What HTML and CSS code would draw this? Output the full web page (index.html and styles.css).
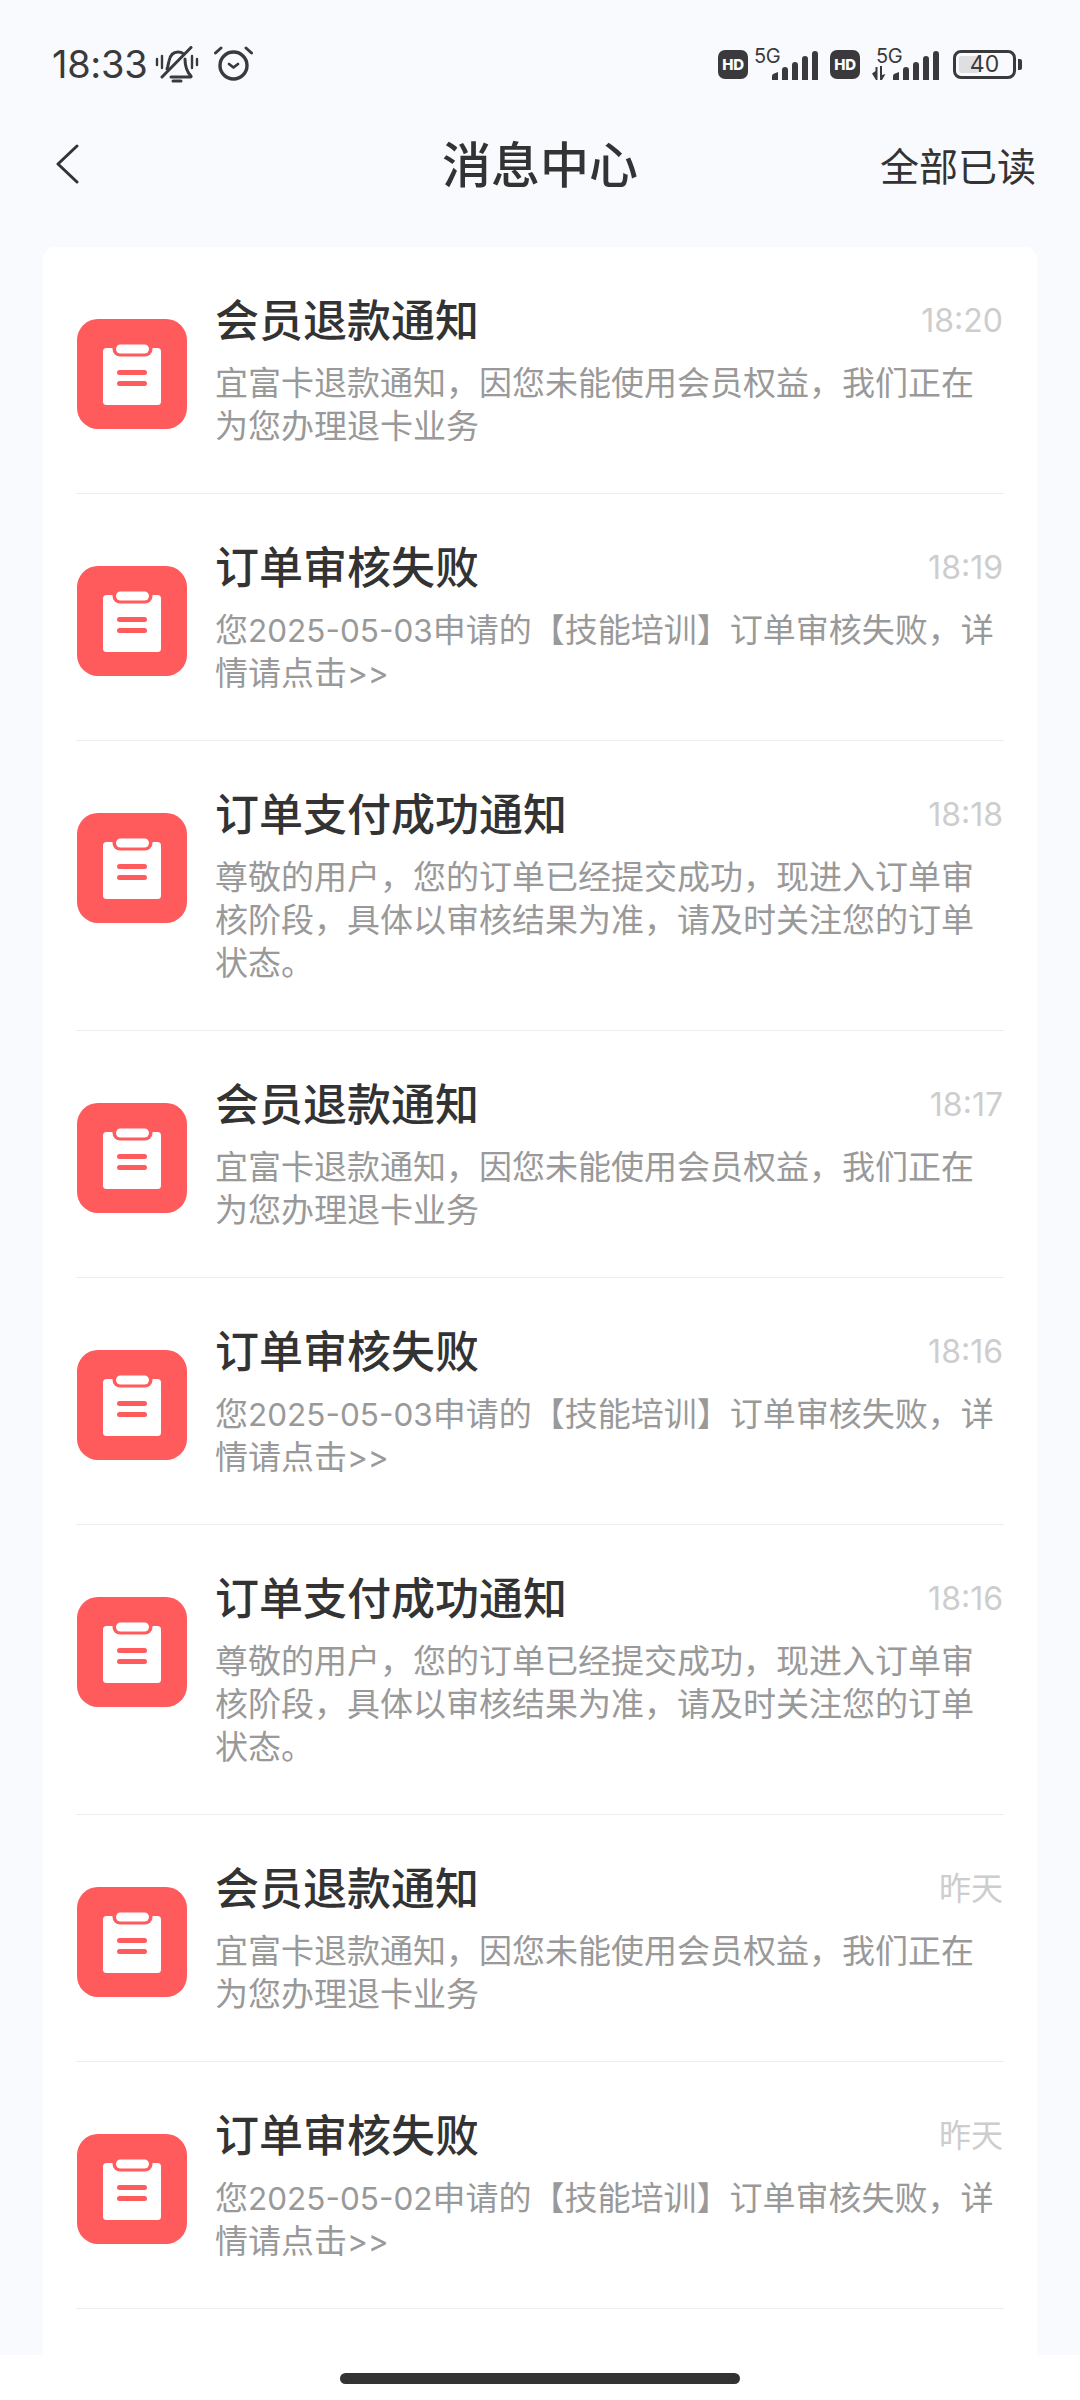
FILE: index.html
```html
<!DOCTYPE html>
<html lang="zh-CN">
<head>
<meta charset="utf-8">
<title>消息中心</title>
<link rel="stylesheet" href="styles.css">
</head>
<body>
<svg class="defs" width="0" height="0" aria-hidden="true">
  <symbol id="clip" viewBox="0 0 110 110">
    <rect width="110" height="110" rx="21" fill="#ff5a5c"/>
    <rect x="26" y="29" width="58" height="57" rx="3.500" fill="#fff"/>
    <rect x="35.500" y="21" width="40" height="16.500" rx="7.500" fill="#ff5a5c"/>
    <rect x="39" y="25.500" width="33" height="9" rx="4.500" fill="#fff"/>
    <rect x="40" y="51" width="30" height="5" rx="2.500" fill="#ff5a5c"/>
    <rect x="40" y="62" width="30" height="5" rx="2.500" fill="#ff5a5c"/>
  </symbol>
  <symbol id="bars" viewBox="0 0 46 29">
    <path d="M0 29v-4a3 3 0 0 1 1-2l5-2v8zM10 29V19a3 3 0 0 1 6 0v10zM20 29V14a3 3 0 0 1 6 0v15zM30 29V8a3 3 0 0 1 6 0v21zM40 29V3a3 3 0 0 1 6 0v26z" fill="#3a3a3c"/>
  </symbol>
</svg>

<div class="phone">
  <div class="status">
    <div class="status-left">
      <span class="clock">18:33</span>
      <svg class="ic-bell" viewBox="0 0 44 37" fill="none" stroke="#3a3a3c" stroke-width="3" stroke-linecap="round" stroke-linejoin="round" aria-hidden="true">
        <path d="M12 23c1-2 1-4 2-8 1-5 4-9 9-9 2 0 4 .6 5 1.500"/>
        <path d="M30 13c0 6 1 12 6 17 .4.600 0 1-.6 1H16"/>
        <path d="M7 31 36 1.500" />
        <path d="M18 35h8"/>
        <path d="M2 13v6M7 10v12M37 10v12M42 13v6" stroke-width="2.400"/>
      </svg>
      <svg class="ic-alarm" viewBox="0 0 39 35" fill="none" stroke="#3a3a3c" stroke-linecap="round" stroke-linejoin="round" aria-hidden="true">
        <circle cx="19.500" cy="19.500" r="13.500" stroke-width="3.400"/>
        <path d="M15 18l4.500 3.500L24 18" stroke-width="2.800"/>
        <path d="M1.500 7 7 2M37.500 7 32 2" stroke-width="3"/>
      </svg>
    </div>
    <div class="status-right">
      <span class="hd">HD</span>
      <div class="sig">
        <span class="fiveg">5G</span>
        <svg class="ic-bars"><use href="#bars"/></svg>
      </div>
      <span class="hd second">HD</span>
      <div class="sig sig-two">
        <span class="fiveg">5G</span>
        <svg class="ic-arrows" viewBox="0 0 14 14" aria-hidden="true"><path d="M0 7.500 3.500 5V1H5.500V14H4L0 7.500zM8 0H10V9L13.500 8 10 14H8V0z" fill="#3a3a3c"/></svg>
        <svg class="ic-bars"><use href="#bars"/></svg>
      </div>
      <div class="battery">
        <div class="batt-body"><span class="batt-fill"></span><span class="batt-num">40</span></div>
        <span class="batt-cap"></span>
      </div>
    </div>
  </div>

  <header class="nav">
    <svg class="back" viewBox="0 0 24 40" fill="none" stroke="#333" stroke-width="3" stroke-linecap="round" stroke-linejoin="round" aria-label="返回"><path d="M22 2 3 20l19 18"/></svg>
    <h1 class="nav-title">消息中心</h1>
    <span class="nav-action">全部已读</span>
  </header>

  <main class="card">
    <article class="row">
      <svg class="thumb"><use href="#clip"/></svg>
      <div class="body">
        <div class="top"><h2 class="title">会员退款通知</h2><time class="time">18:20</time></div>
        <p class="desc">宜富卡退款通知，因您未能使用会员权益，我们正在为您办理退卡业务</p>
      </div>
    </article>
    <article class="row">
      <svg class="thumb"><use href="#clip"/></svg>
      <div class="body">
        <div class="top"><h2 class="title">订单审核失败</h2><time class="time">18:19</time></div>
        <p class="desc"><span>您</span><span class="num">2025-05-03</span><span>申请的【技能培训】订单审核失败，详</span><span>情请点击</span><span class="num">&gt;&gt;</span></p>
      </div>
    </article>
    <article class="row">
      <svg class="thumb"><use href="#clip"/></svg>
      <div class="body">
        <div class="top"><h2 class="title">订单支付成功通知</h2><time class="time">18:18</time></div>
        <p class="desc">尊敬的用户，您的订单已经提交成功，现进入订单审核阶段，具体以审核结果为准，请及时关注您的订单状态。</p>
      </div>
    </article>
    <article class="row">
      <svg class="thumb"><use href="#clip"/></svg>
      <div class="body">
        <div class="top"><h2 class="title">会员退款通知</h2><time class="time">18:17</time></div>
        <p class="desc">宜富卡退款通知，因您未能使用会员权益，我们正在为您办理退卡业务</p>
      </div>
    </article>
    <article class="row">
      <svg class="thumb"><use href="#clip"/></svg>
      <div class="body">
        <div class="top"><h2 class="title">订单审核失败</h2><time class="time">18:16</time></div>
        <p class="desc"><span>您</span><span class="num">2025-05-03</span><span>申请的【技能培训】订单审核失败，详</span><span>情请点击</span><span class="num">&gt;&gt;</span></p>
      </div>
    </article>
    <article class="row">
      <svg class="thumb"><use href="#clip"/></svg>
      <div class="body">
        <div class="top"><h2 class="title">订单支付成功通知</h2><time class="time">18:16</time></div>
        <p class="desc">尊敬的用户，您的订单已经提交成功，现进入订单审核阶段，具体以审核结果为准，请及时关注您的订单状态。</p>
      </div>
    </article>
    <article class="row">
      <svg class="thumb"><use href="#clip"/></svg>
      <div class="body">
        <div class="top"><h2 class="title">会员退款通知</h2><time class="time">昨天</time></div>
        <p class="desc">宜富卡退款通知，因您未能使用会员权益，我们正在为您办理退卡业务</p>
      </div>
    </article>
    <article class="row">
      <svg class="thumb"><use href="#clip"/></svg>
      <div class="body">
        <div class="top"><h2 class="title">订单审核失败</h2><time class="time">昨天</time></div>
        <p class="desc"><span>您</span><span class="num">2025-05-02</span><span>申请的【技能培训】订单审核失败，详</span><span>情请点击</span><span class="num">&gt;&gt;</span></p>
      </div>
    </article>
  </main>

  <footer class="home-area"><span class="home-bar"></span></footer>
</div>
</body>
</html>
```

FILE: styles.css
```css
* { box-sizing: border-box; }
html, body { margin: 0; padding: 0; }
body {
  width: 1080px;
  height: 2400px;
  overflow: hidden;
  background: #f9fafe;
  font-family: "Inter", "Noto Sans CJK SC", sans-serif;
  color: #333;
}
.defs { position: absolute; }

.phone {
  width: 1080px;
  height: 2400px;
  display: flex;
  flex-direction: column;
}

.status {
  height: 98px;
  padding: 46px 58px 0 52px;
  display: flex;
  justify-content: space-between;
  align-items: flex-start;
  color: #3a3a3c;
  flex: none;
}
.status-left { display: flex; align-items: flex-start; height: 38px; }
.clock { font-size: 38px; line-height: 36px; font-weight: 400; width: 103px; letter-spacing: -.3px; }
.ic-bell { width: 44px; height: 37px; }
.ic-alarm { width: 39px; height: 35px; margin-left: 15px; }

.status-right { display: flex; align-items: flex-start; height: 38px; }
.hd {
  width: 30px;
  height: 29px;
  margin-top: 4px;
  display: flex;
  align-items: center;
  justify-content: center;
  background: #3a3a3c;
  color: #fff;
  border-radius: 7px;
  font-size: 15px;
  font-weight: 800;
  letter-spacing: -.3px;
}
.hd.second { margin-left: 12px; }
.sig { position: relative; width: 70px; height: 34px; }
.sig-two { width: 79px; }
.fiveg { position: absolute; left: 6px; top: 0; font-size: 20px; line-height: 20px; letter-spacing: -.5px; color: #3a3a3c; }
.sig-two .fiveg { left: 16px; }
.ic-bars { position: absolute; right: 0; bottom: 0; width: 46px; height: 29px; }
.ic-arrows { position: absolute; left: 12px; bottom: 0; width: 14px; height: 14px; }

.battery { display: flex; align-items: center; margin-left: 14px; margin-top: 4px; }
.batt-body {
  position: relative;
  width: 63px;
  height: 29px;
  border: 3px solid #3a3a3c;
  border-radius: 8px;
  display: flex;
  align-items: center;
  justify-content: center;
}
.batt-fill {
  position: absolute;
  left: 3px; top: 3px; bottom: 3px;
  width: 20px;
  background: #dfdfe1;
  border-radius: 2px;
}
.batt-num { position: relative; font-size: 23px; line-height: 23px; color: #3a3a3c; }
.batt-cap { width: 4px; height: 11px; margin-left: 2px; background: #3a3a3c; border-radius: 0 2px 2px 0; }

.nav {
  position: relative;
  height: 132px;
  padding: 0 44px 0 55px;
  display: flex;
  align-items: center;
  justify-content: space-between;
  flex: none;
}
.back { width: 24px; height: 40px; }
.nav-title {
  position: absolute;
  left: 0; right: 0;
  margin: -4px 0 0;
  text-align: center;
  font: 500 49px/60px "Noto Sans CJK SC", sans-serif;
  color: #333;
  pointer-events: none;
}
.nav-action { font: 400 39px/50px "Noto Sans CJK SC", sans-serif; color: #333; }

.card {
  flex: 1;
  margin: 17px 43px 0;
  padding: 0 33px;
  background: #fff;
  border-radius: 12px 12px 0 0;
  min-height: 0;
}
.row {
  display: flex;
  align-items: flex-start;
  gap: 29px;
  padding: 46px 0 47px;
  border-bottom: 1px solid #eeeeef;
}
.thumb { width: 110px; height: 110px; flex: none; margin: 26px 0 0 1px; }
.body { flex: 1; min-width: 0; margin-left: -1px; }
.top { display: flex; justify-content: space-between; align-items: center; height: 52px; }
.title { margin: -2px 0 0; font: 500 44px/52px "Noto Sans CJK SC", sans-serif; color: #333; }
.time { font: 400 32px/44px "Inter", "Noto Sans CJK SC", sans-serif; color: #cdcdcd; margin: 4px 1px 0 0; }
.desc {
  margin: 15px 0 0;
  font: 400 33px/43px "Noto Sans CJK SC", sans-serif;
  color: #999;
}
.desc span { display: inline-block; }
.desc .num { font-family: "Inter", sans-serif; font-size: 31.500px; line-height: 1; }

.home-area {
  height: 45px;
  background: #fff;
  display: flex;
  justify-content: center;
  padding-top: 18px;
  flex: none;
}
.home-bar { width: 400px; height: 11px; background: #333; border-radius: 6px; }
```
